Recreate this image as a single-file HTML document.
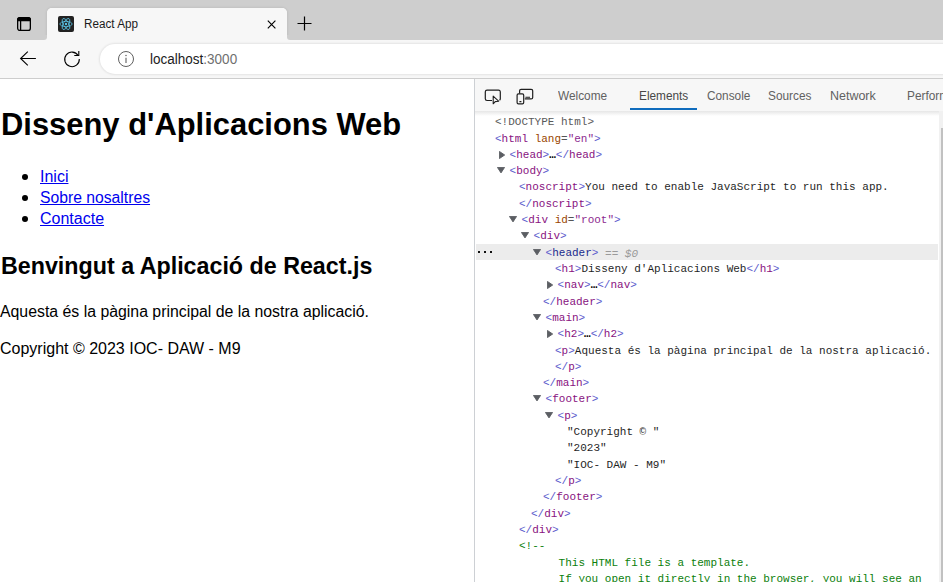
<!DOCTYPE html>
<html><head><meta charset="utf-8"><style>
*{box-sizing:border-box;margin:0;padding:0}
html,body{width:943px;height:582px;overflow:hidden;background:#fff;font-family:"Liberation Sans",sans-serif;position:relative}
.a{position:absolute}
.t{position:absolute;white-space:pre;line-height:1}
.sans{font-family:"Liberation Sans",sans-serif}.mono{font-family:"Liberation Mono",monospace}
.tg{color:#881280}.br{color:#5c5bcc}.an{color:#994500}.av{color:#8d2a8f}.tx{color:#1f1f1f}.cm{color:#0b800b}.eq{color:#555}.dt{color:#5a5a5a}
</style></head><body>
<div class="a" style="left:0px;top:0px;width:943px;height:40px;background:#cecece"></div>
<div class="a" style="left:47px;top:8px;width:240px;height:32px;background:#f7f7f7;border-radius:5px 5px 0 0;box-shadow:0 0 3px 0 rgba(0,0,0,0.13)"></div>
<div class="a" style="left:0px;top:40px;width:943px;height:38px;background:#f7f7f7"></div>
<div class="a" style="left:42px;top:35px;width:5px;height:5px;background:#f7f7f7"></div>
<div class="a" style="left:42px;top:35px;width:5px;height:5px;background:#cecece;border-bottom-right-radius:3px"></div>
<div class="a" style="left:287px;top:35px;width:5px;height:5px;background:#f7f7f7"></div>
<div class="a" style="left:287px;top:35px;width:5px;height:5px;background:#cecece;border-bottom-left-radius:3px"></div>
<div class="a" style="left:47px;top:8px;width:240px;height:33px;background:#f7f7f7;border-radius:5px 5px 0 0"></div>
<div class="a" style="left:100px;top:44px;width:900px;height:30px;background:#fff;border-radius:15px;box-shadow:0 0 2px 1px rgba(0,0,0,0.08)"></div>
<div class="a" style="left:0px;top:78px;width:943px;height:1px;background:#cdcdcd"></div>
<svg class="a" style="left:16px;top:16px" width="16" height="16" viewBox="0 0 16 16">
<rect x="1.65" y="1.65" width="12.7" height="12.7" rx="2.2" fill="none" stroke="#000" stroke-width="1.3"/>
<path d="M1.65 4.6 V3.8 A2.2 2.2 0 0 1 3.85 1.65 H12.15 A2.2 2.2 0 0 1 14.35 3.8 V4.6 Z" fill="#000" stroke="#000" stroke-width="1.3"/>
<line x1="4.6" y1="4.4" x2="4.6" y2="14.35" stroke="#000" stroke-width="1.3"/>
</svg>
<svg class="a" style="left:58px;top:16px" width="16" height="16" viewBox="0 0 16 16">
<rect x="0" y="0" width="16" height="16" rx="2" fill="#222"/>
<g fill="none" stroke="#5bc4e6" stroke-width="0.8">
<ellipse cx="8" cy="8" rx="6.1" ry="2.65"/>
<ellipse cx="8" cy="8" rx="6.1" ry="2.65" transform="rotate(60 8 8)"/>
<ellipse cx="8" cy="8" rx="6.1" ry="2.65" transform="rotate(120 8 8)"/>
</g><circle cx="8" cy="8" r="1.2" fill="#5bc4e6"/>
</svg>
<div class="t sans" style="left:84px;top:18px;font-weight:normal;font-size:12px;color:#1b1b1b;transform:scaleX(0.975);transform-origin:0 0;">React App</div>
<svg class="a" style="left:266px;top:19px" width="11" height="11" viewBox="0 0 11 11">
<path d="M1.8 1.7 L9.4 9.3 M9.4 1.7 L1.8 9.3" stroke="#000" stroke-width="1.15" fill="none"/></svg>
<svg class="a" style="left:296px;top:15px" width="17" height="17" viewBox="0 0 17 17">
<path d="M8.5 1.5 V15.5 M1.5 8.5 H15.5" stroke="#000" stroke-width="1.2" fill="none"/></svg>
<svg class="a" style="left:18px;top:50px" width="20" height="18" viewBox="0 0 20 18">
<path d="M9.8 1.6 L2.6 8.5 L9.8 15.4 M2.6 8.5 H17.9" stroke="#000" stroke-width="1.1" fill="none"/></svg>
<svg class="a" style="left:62px;top:49px" width="20" height="20" viewBox="0 0 20 20">
<path d="M16.2 6.5 A7.3 7.3 0 1 0 17.3 10" stroke="#000" stroke-width="1.1" fill="none"/>
<path d="M16.8 2 V6.5 H12.3" stroke="#000" stroke-width="1.1" fill="none"/></svg>
<svg class="a" style="left:117px;top:50px" width="18" height="18" viewBox="0 0 18 18">
<circle cx="9" cy="9" r="7.5" stroke="#5f5f5f" stroke-width="1" fill="none"/>
<path d="M9 7.8 V13" stroke="#5f5f5f" stroke-width="1.1"/><circle cx="9" cy="5.5" r="0.75" fill="#5f5f5f"/></svg>
<div class="t sans" style="left:150px;top:52px;font-size:14px;color:#1b1b1b;transform:scaleX(0.965);transform-origin:0 0">localhost<span style="color:#6f6f6f">:3000</span></div>
<div class="t sans" style="left:1px;top:108px;font-weight:bold;font-size:32px;color:#000;transform:scaleX(0.966);transform-origin:0 0;">Disseny d&#x27;Aplicacions Web</div>
<div class="a" style="left:22px;top:174px;width:6px;height:6px;border-radius:50%;background:#000"></div>
<div class="t sans" style="left:40px;top:169px;font-weight:normal;font-size:16px;color:#0000ee;text-decoration:underline">Inici</div>
<div class="a" style="left:22px;top:195px;width:6px;height:6px;border-radius:50%;background:#000"></div>
<div class="t sans" style="left:40px;top:190px;font-weight:normal;font-size:16px;color:#0000ee;transform:scaleX(0.982);transform-origin:0 0;text-decoration:underline">Sobre nosaltres</div>
<div class="a" style="left:22px;top:216px;width:6px;height:6px;border-radius:50%;background:#000"></div>
<div class="t sans" style="left:40px;top:211px;font-weight:normal;font-size:16px;color:#0000ee;text-decoration:underline">Contacte</div>
<div class="t sans" style="left:1px;top:254px;font-weight:bold;font-size:24px;color:#000;transform:scaleX(0.969);transform-origin:0 0;">Benvingut a Aplicació de React.js</div>
<div class="t sans" style="left:0px;top:304px;font-weight:normal;font-size:16px;color:#000;transform:scaleX(0.99);transform-origin:0 0;">Aquesta és la pàgina principal de la nostra aplicació.</div>
<div class="t sans" style="left:0px;top:341px;font-weight:normal;font-size:16px;color:#000;">Copyright © 2023 IOC- DAW - M9</div>
<div class="a" style="left:474px;top:79px;width:1px;height:503px;background:#cdd0d4"></div>
<div class="a" style="left:475px;top:79px;width:468px;height:32px;background:#f7f7f7"></div>
<div class="a" style="left:475px;top:111px;width:468px;height:5px;background:linear-gradient(#e6e6e6,#fff)"></div>
<div class="a" style="left:939px;top:111px;width:4px;height:471px;background:#f1f1f1"></div>
<div class="a" style="left:941px;top:128px;width:2px;height:454px;background:#c1c1c1"></div>
<svg class="a" style="left:484px;top:89px" width="18" height="16" viewBox="0 0 18 16">
<path d="M8 11.5 H3 A1.8 1.8 0 0 1 1.3 9.7 V2.8 A1.8 1.8 0 0 1 3 1.2 H14.5 A1.8 1.8 0 0 1 16.3 2.8 V9.7 A1.8 1.8 0 0 1 15.5 11.2" stroke="#1f1f1f" stroke-width="1.2" fill="none"/>
<path d="M9.2 7.2 L9.2 14.8 L11.2 12.6 L14.6 12.2 Z" stroke="#1f1f1f" stroke-width="1.1" fill="none" stroke-linejoin="round"/></svg>
<svg class="a" style="left:516px;top:88px" width="18" height="17" viewBox="0 0 18 17">
<path d="M3.6 5.5 V2.8 A1.5 1.5 0 0 1 5.1 1.3 H15.2 A1.5 1.5 0 0 1 16.7 2.8 V9.4 A1.5 1.5 0 0 1 15.2 10.9 H8.8" stroke="#1f1f1f" stroke-width="1.2" fill="none"/>
<rect x="1.1" y="5.9" width="6.6" height="9.9" rx="1.3" stroke="#1f1f1f" stroke-width="1.2" fill="none"/>
<path d="M3.4 13.6 H5.4 M9.4 9.2 H14" stroke="#1f1f1f" stroke-width="1.1"/></svg>
<div class="t sans" style="left:558px;top:90px;font-weight:normal;font-size:12px;color:#616161;transform:scaleX(0.985);transform-origin:0 0;">Welcome</div>
<div class="t sans" style="left:639px;top:90px;font-weight:normal;font-size:12px;color:#474747;transform:scaleX(0.985);transform-origin:0 0;">Elements</div>
<div class="t sans" style="left:707px;top:90px;font-weight:normal;font-size:12px;color:#616161;transform:scaleX(0.985);transform-origin:0 0;">Console</div>
<div class="t sans" style="left:768px;top:90px;font-weight:normal;font-size:12px;color:#616161;transform:scaleX(0.985);transform-origin:0 0;">Sources</div>
<div class="t sans" style="left:830px;top:90px;font-weight:normal;font-size:12px;color:#616161;transform:scaleX(1.04);transform-origin:0 0;">Network</div>
<div class="t sans" style="left:907px;top:90px;font-weight:normal;font-size:12px;color:#616161;transform:scaleX(0.985);transform-origin:0 0;">Performance</div>
<div class="a" style="left:630px;top:108px;width:67px;height:2px;background:#0f6cbd"></div>
<div class="a" style="left:476px;top:244px;width:462px;height:16px;background:#ececec"></div>
<div class="a" style="left:477.7px;top:251px;width:2px;height:2px;background:#111"></div>
<div class="a" style="left:484px;top:251px;width:2px;height:2px;background:#111"></div>
<div class="a" style="left:490.3px;top:251px;width:2px;height:2px;background:#111"></div>
<div class="t mono" style="left:495px;top:117px;font-size:11px"><span class="dt">&lt;!DOCTYPE html&gt;</span></div>
<div class="t mono" style="left:495px;top:134px;font-size:11px"><span class="br">&lt;</span><span class="tg">html</span> <span class="an">lang</span><span class="eq">=</span><span class="av">"en"</span><span class="br">&gt;</span></div>
<div class="t mono" style="left:509.6px;top:150px;font-size:11px"><span class="br">&lt;</span><span class="tg">head</span><span class="br">&gt;</span><span style="color:#000;font-weight:bold">…</span><span class="br">&lt;/</span><span class="tg">head</span><span class="br">&gt;</span></div>
<svg class="a" style="left:499px;top:151px" width="7" height="8" viewBox="0 0 7 8"><path d="M0.45 0.45 L5.7 4 L0.45 7.55 Z" fill="#5b5e63" stroke="#5b5e63" stroke-width="0.9" stroke-linejoin="round"/></svg>
<div class="t mono" style="left:509.6px;top:166px;font-size:11px"><span class="br">&lt;</span><span class="tg">body</span><span class="br">&gt;</span></div>
<svg class="a" style="left:497px;top:167px" width="8" height="7" viewBox="0 0 8 7"><path d="M0.45 0.45 H7.55 L4 5.9 Z" fill="#5b5e63" stroke="#5b5e63" stroke-width="0.9" stroke-linejoin="round"/></svg>
<div class="t mono" style="left:519px;top:182px;font-size:11px"><span class="br">&lt;</span><span class="tg">noscript</span><span class="br">&gt;</span><span class="tx">You need to enable JavaScript to run this app.</span></div>
<div class="t mono" style="left:519px;top:199px;font-size:11px"><span class="br">&lt;/</span><span class="tg">noscript</span><span class="br">&gt;</span></div>
<div class="t mono" style="left:521.6px;top:215px;font-size:11px"><span class="br">&lt;</span><span class="tg">div</span> <span class="an">id</span><span class="eq">=</span><span class="av">"root"</span><span class="br">&gt;</span></div>
<svg class="a" style="left:509px;top:216px" width="8" height="7" viewBox="0 0 8 7"><path d="M0.45 0.45 H7.55 L4 5.9 Z" fill="#5b5e63" stroke="#5b5e63" stroke-width="0.9" stroke-linejoin="round"/></svg>
<div class="t mono" style="left:533.6px;top:231px;font-size:11px"><span class="br">&lt;</span><span class="tg">div</span><span class="br">&gt;</span></div>
<svg class="a" style="left:521px;top:232px" width="8" height="7" viewBox="0 0 8 7"><path d="M0.45 0.45 H7.55 L4 5.9 Z" fill="#5b5e63" stroke="#5b5e63" stroke-width="0.9" stroke-linejoin="round"/></svg>
<div class="t mono" style="left:545.6px;top:248px;font-size:11px"><span class="br">&lt;</span><span style="color:#1a2a8c">header</span><span class="br">&gt;</span> <span style="color:#9a9a9a;font-style:italic;position:relative;top:1px">== $0</span></div>
<svg class="a" style="left:533px;top:249px" width="8" height="7" viewBox="0 0 8 7"><path d="M0.45 0.45 H7.55 L4 5.9 Z" fill="#5b5e63" stroke="#5b5e63" stroke-width="0.9" stroke-linejoin="round"/></svg>
<div class="t mono" style="left:555px;top:264px;font-size:11px"><span class="br">&lt;</span><span class="tg">h1</span><span class="br">&gt;</span><span class="tx">Disseny d'Aplicacions Web</span><span class="br">&lt;/</span><span class="tg">h1</span><span class="br">&gt;</span></div>
<div class="t mono" style="left:557.6px;top:280px;font-size:11px"><span class="br">&lt;</span><span class="tg">nav</span><span class="br">&gt;</span><span style="color:#000;font-weight:bold">…</span><span class="br">&lt;/</span><span class="tg">nav</span><span class="br">&gt;</span></div>
<svg class="a" style="left:547px;top:281px" width="7" height="8" viewBox="0 0 7 8"><path d="M0.45 0.45 L5.7 4 L0.45 7.55 Z" fill="#5b5e63" stroke="#5b5e63" stroke-width="0.9" stroke-linejoin="round"/></svg>
<div class="t mono" style="left:543px;top:297px;font-size:11px"><span class="br">&lt;/</span><span class="tg">header</span><span class="br">&gt;</span></div>
<div class="t mono" style="left:545.6px;top:313px;font-size:11px"><span class="br">&lt;</span><span class="tg">main</span><span class="br">&gt;</span></div>
<svg class="a" style="left:533px;top:314px" width="8" height="7" viewBox="0 0 8 7"><path d="M0.45 0.45 H7.55 L4 5.9 Z" fill="#5b5e63" stroke="#5b5e63" stroke-width="0.9" stroke-linejoin="round"/></svg>
<div class="t mono" style="left:557.6px;top:329px;font-size:11px"><span class="br">&lt;</span><span class="tg">h2</span><span class="br">&gt;</span><span style="color:#000;font-weight:bold">…</span><span class="br">&lt;/</span><span class="tg">h2</span><span class="br">&gt;</span></div>
<svg class="a" style="left:547px;top:330px" width="7" height="8" viewBox="0 0 7 8"><path d="M0.45 0.45 L5.7 4 L0.45 7.55 Z" fill="#5b5e63" stroke="#5b5e63" stroke-width="0.9" stroke-linejoin="round"/></svg>
<div class="t mono" style="left:555px;top:346px;font-size:11px"><span class="br">&lt;</span><span class="tg">p</span><span class="br">&gt;</span><span class="tx">Aquesta és la pàgina principal de la nostra aplicació.</span></div>
<div class="t mono" style="left:555px;top:362px;font-size:11px"><span class="br">&lt;/</span><span class="tg">p</span><span class="br">&gt;</span></div>
<div class="t mono" style="left:543px;top:378px;font-size:11px"><span class="br">&lt;/</span><span class="tg">main</span><span class="br">&gt;</span></div>
<div class="t mono" style="left:545.6px;top:394px;font-size:11px"><span class="br">&lt;</span><span class="tg">footer</span><span class="br">&gt;</span></div>
<svg class="a" style="left:533px;top:395px" width="8" height="7" viewBox="0 0 8 7"><path d="M0.45 0.45 H7.55 L4 5.9 Z" fill="#5b5e63" stroke="#5b5e63" stroke-width="0.9" stroke-linejoin="round"/></svg>
<div class="t mono" style="left:557.6px;top:411px;font-size:11px"><span class="br">&lt;</span><span class="tg">p</span><span class="br">&gt;</span></div>
<svg class="a" style="left:545px;top:412px" width="8" height="7" viewBox="0 0 8 7"><path d="M0.45 0.45 H7.55 L4 5.9 Z" fill="#5b5e63" stroke="#5b5e63" stroke-width="0.9" stroke-linejoin="round"/></svg>
<div class="t mono" style="left:567px;top:427px;font-size:11px"><span class="tx">"Copyright © "</span></div>
<div class="t mono" style="left:567px;top:443px;font-size:11px"><span class="tx">"2023"</span></div>
<div class="t mono" style="left:567px;top:460px;font-size:11px"><span class="tx">"IOC- DAW - M9"</span></div>
<div class="t mono" style="left:555px;top:476px;font-size:11px"><span class="br">&lt;/</span><span class="tg">p</span><span class="br">&gt;</span></div>
<div class="t mono" style="left:543px;top:492px;font-size:11px"><span class="br">&lt;/</span><span class="tg">footer</span><span class="br">&gt;</span></div>
<div class="t mono" style="left:531px;top:509px;font-size:11px"><span class="br">&lt;/</span><span class="tg">div</span><span class="br">&gt;</span></div>
<div class="t mono" style="left:519px;top:525px;font-size:11px"><span class="br">&lt;/</span><span class="tg">div</span><span class="br">&gt;</span></div>
<div class="t mono" style="left:519px;top:541px;font-size:11px"><span class="cm">&lt;!--</span></div>
<div class="t mono" style="left:519px;top:558px;font-size:11px"><span class="cm">      This HTML file is a template.</span></div>
<div class="t mono" style="left:519px;top:574px;font-size:11px"><span class="cm">      If you open it directly in the browser, you will see an</span></div>
</body></html>
